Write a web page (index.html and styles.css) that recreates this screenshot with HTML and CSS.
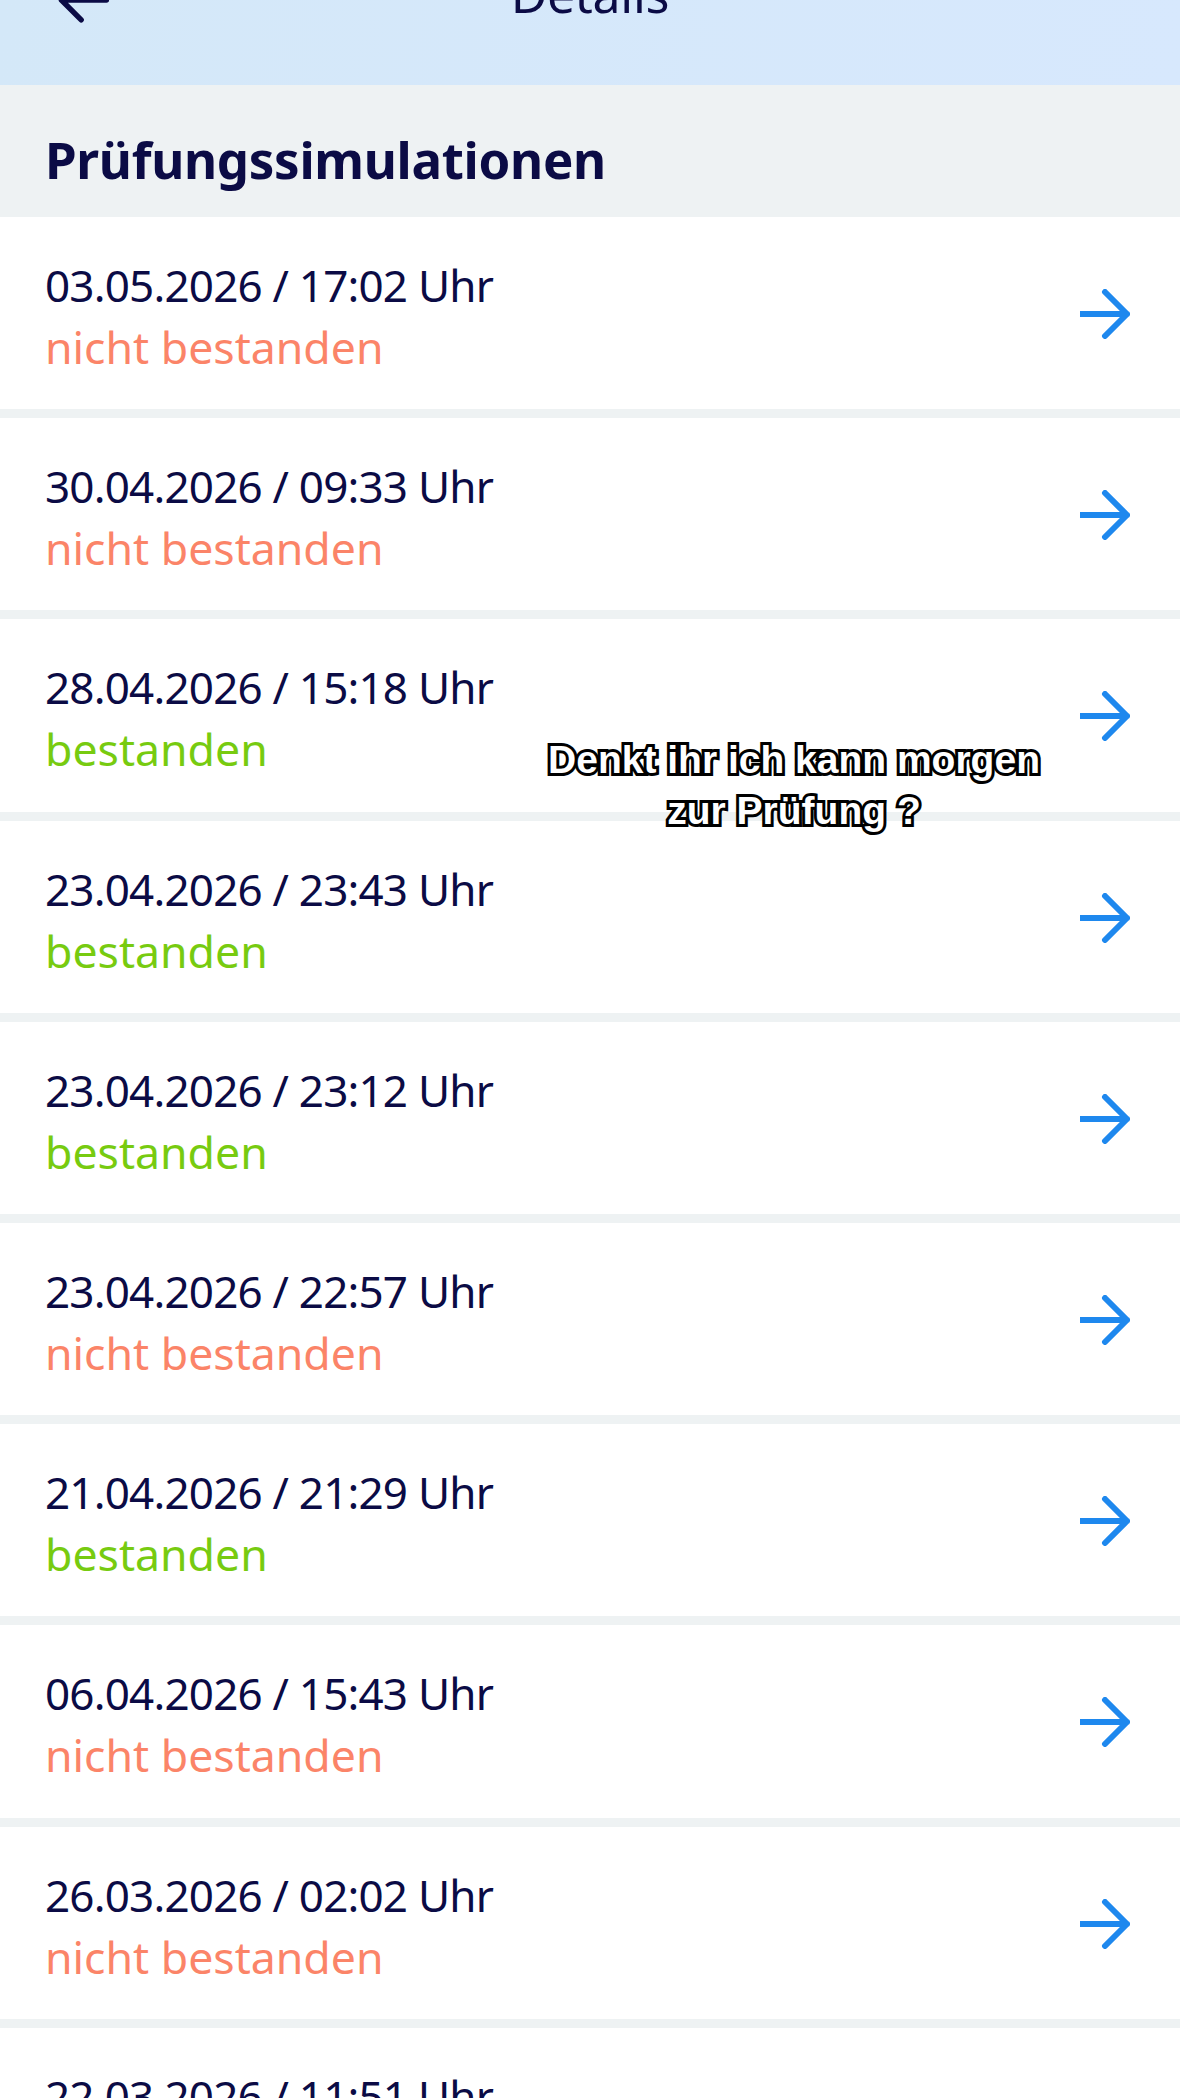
FILE: index.html
```html
<!DOCTYPE html>
<html lang="de">
<head>
    <meta charset="UTF-8">
    <title>Details</title>
    <link rel="stylesheet" href="styles.css">
</head>
<body>
    <div class="top-bar">
        <svg class="back-icon" viewBox="0 0 60 60"><path d="M56 30H6M28 8 6 30l22 22"/></svg>
        <div class="top-title">Details</div>
    </div>

    <div class="section-title">Prüfungssimulationen</div>

    <div class="sim-list">
        <div class="sim-row">
            <div><div class="sim-date">03.05.2026 / 17:02 Uhr</div><div class="sim-status failed">nicht bestanden</div></div>
            <svg class="go-icon" viewBox="0 0 50 50"><path d="M1 25h46M25 3l22 22-22 22"/></svg>
        </div>
        <div class="sim-row">
            <div><div class="sim-date">30.04.2026 / 09:33 Uhr</div><div class="sim-status failed">nicht bestanden</div></div>
            <svg class="go-icon" viewBox="0 0 50 50"><path d="M1 25h46M25 3l22 22-22 22"/></svg>
        </div>
        <div class="sim-row">
            <div><div class="sim-date">28.04.2026 / 15:18 Uhr</div><div class="sim-status passed">bestanden</div></div>
            <svg class="go-icon" viewBox="0 0 50 50"><path d="M1 25h46M25 3l22 22-22 22"/></svg>
        </div>
        <div class="sim-row">
            <div><div class="sim-date">23.04.2026 / 23:43 Uhr</div><div class="sim-status passed">bestanden</div></div>
            <svg class="go-icon" viewBox="0 0 50 50"><path d="M1 25h46M25 3l22 22-22 22"/></svg>
        </div>
        <div class="sim-row">
            <div><div class="sim-date">23.04.2026 / 23:12 Uhr</div><div class="sim-status passed">bestanden</div></div>
            <svg class="go-icon" viewBox="0 0 50 50"><path d="M1 25h46M25 3l22 22-22 22"/></svg>
        </div>
        <div class="sim-row">
            <div><div class="sim-date">23.04.2026 / 22:57 Uhr</div><div class="sim-status failed">nicht bestanden</div></div>
            <svg class="go-icon" viewBox="0 0 50 50"><path d="M1 25h46M25 3l22 22-22 22"/></svg>
        </div>
        <div class="sim-row">
            <div><div class="sim-date">21.04.2026 / 21:29 Uhr</div><div class="sim-status passed">bestanden</div></div>
            <svg class="go-icon" viewBox="0 0 50 50"><path d="M1 25h46M25 3l22 22-22 22"/></svg>
        </div>
        <div class="sim-row">
            <div><div class="sim-date">06.04.2026 / 15:43 Uhr</div><div class="sim-status failed">nicht bestanden</div></div>
            <svg class="go-icon" viewBox="0 0 50 50"><path d="M1 25h46M25 3l22 22-22 22"/></svg>
        </div>
        <div class="sim-row">
            <div><div class="sim-date">26.03.2026 / 02:02 Uhr</div><div class="sim-status failed">nicht bestanden</div></div>
            <svg class="go-icon" viewBox="0 0 50 50"><path d="M1 25h46M25 3l22 22-22 22"/></svg>
        </div>
        <div class="sim-row">
            <div><div class="sim-date">22.03.2026 / 11:51 Uhr</div><div class="sim-status passed">bestanden</div></div>
            <svg class="go-icon" viewBox="0 0 50 50"><path d="M1 25h46M25 3l22 22-22 22"/></svg>
        </div>
    </div>

    <div class="caption">Denkt ihr ich kann morgen<br>zur Prüfung ?</div>
</body>
</html>
```

FILE: styles.css
```css
* {
    margin: 0;
    padding: 0;
    box-sizing: border-box;
}

html,
body {
    height: 100%;
    overflow: hidden;
}

body {
    position: relative;
    font-family: 'Noto Sans', sans-serif;
    background-color: #eef2f3;
    color: #0b0b45;
}

.top-bar {
    position: relative;
    height: 85px;
    overflow: hidden;
    background: linear-gradient(100deg, #d4e8f8, #d7e8fd);
}

.back-icon {
    position: absolute;
    left: 56px;
    top: -27px;
    width: 54px;
    height: 54px;
    fill: none;
    stroke: #0b0b45;
    stroke-width: 6;
    stroke-linecap: round;
    stroke-linejoin: round;
}

.top-title {
    position: absolute;
    left: 0;
    right: 0;
    top: -40px;
    text-align: center;
    font-size: 50px;
    line-height: 68px;
    letter-spacing: -0.3px;
}

.section-title {
    height: 132px;
    padding: 42px 45px 0;
    font-size: 51px;
    font-weight: 700;
    line-height: 64px;
    letter-spacing: -0.3px;
}

.sim-list {
    display: flex;
    flex-direction: column;
    gap: 9px;
}

.sim-row {
    display: flex;
    flex-shrink: 0;
    justify-content: space-between;
    align-items: center;
    height: 192.2px;
    padding: 0 50px 0 45px;
    background-color: #fff;
}

.sim-date {
    margin-top: 6px;
    font-size: 44px;
    line-height: 62px;
    letter-spacing: -0.8px;
}

.sim-status {
    font-size: 44.6px;
    line-height: 62px;
}

.failed {
    color: #fb8468;
}

.passed {
    color: #77cb10;
}

.go-icon {
    width: 50px;
    height: 50px;
    margin-top: 2px;
    fill: none;
    stroke: #1e88ee;
    stroke-width: 6;
    stroke-linecap: round;
    stroke-linejoin: round;
}

.caption {
    position: absolute;
    left: 494px;
    top: 734px;
    width: 600px;
    text-align: center;
    font-family: 'Liberation Sans', sans-serif;
    font-size: 39px;
    font-weight: 700;
    line-height: 51px;
    color: #fff;
    -webkit-text-stroke: 6px #000;
    paint-order: stroke fill;
}
```
